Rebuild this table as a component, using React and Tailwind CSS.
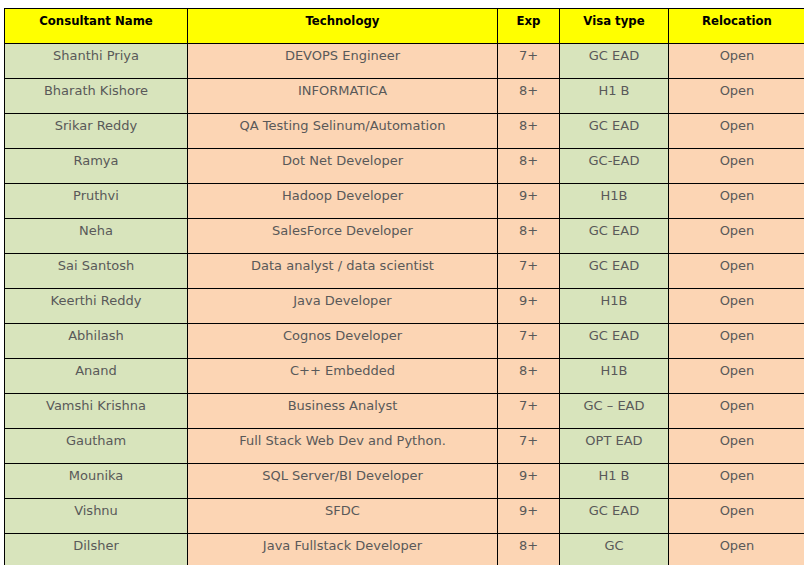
import React from "react";

const rows = [
  ["Shanthi Priya", "DEVOPS Engineer", "7+", "GC EAD", "Open"],
  ["Bharath Kishore", "INFORMATICA", "8+", "H1 B", "Open"],
  ["Srikar Reddy", "QA Testing Selinum/Automation", "8+", "GC EAD", "Open"],
  ["Ramya", "Dot Net Developer", "8+", "GC-EAD", "Open"],
  ["Pruthvi", "Hadoop Developer", "9+", "H1B", "Open"],
  ["Neha", "SalesForce Developer", "8+", "GC EAD", "Open"],
  ["Sai Santosh", "Data analyst / data scientist", "7+", "GC EAD", "Open"],
  ["Keerthi Reddy", "Java Developer", "9+", "H1B", "Open"],
  ["Abhilash", "Cognos Developer", "7+", "GC EAD", "Open"],
  ["Anand", "C++ Embedded", "8+", "H1B", "Open"],
  ["Vamshi Krishna", "Business Analyst", "7+", "GC \u2013 EAD", "Open"],
  ["Gautham", "Full Stack Web Dev and Python.", "7+", "OPT EAD", "Open"],
  ["Mounika", "SQL Server/BI Developer", "9+", "H1 B", "Open"],
  ["Vishnu", "SFDC", "9+", "GC EAD", "Open"],
  ["Dilsher", "Java Fullstack Developer", "8+", "GC", "Open"],
];

const headers = ["Consultant Name", "Technology", "Exp", "Visa type", "Relocation"];
const widths = ["w-[183px]", "w-[310px]", "w-[62px]", "w-[109px]", "w-[137px]"];
const bgs = ["bg-[#d8e4bc]", "bg-[#fcd5b4]", "bg-[#fcd5b4]", "bg-[#d8e4bc]", "bg-[#fcd5b4]"];

export default function App() {
  return (
    <div className="w-[804px] h-[565px] overflow-hidden bg-white pt-[8px] pl-[4px]" style={{ fontFamily: "Tahoma, 'DejaVu Sans', sans-serif" }}>
      <table className="border-collapse table-fixed w-[801px] text-[13px]">
        <thead>
          <tr className="h-[35px]">
            {headers.map((h, i) => (
              <th
                key={h}
                className={`${widths[i]} bg-[#ffff00] border border-black align-top pt-[2px] font-bold text-black text-center font-['DejaVu_Sans_Condensed',sans-serif]`}
              >
                {h}
              </th>
            ))}
          </tr>
        </thead>
        <tbody>
          {rows.map((r, ri) => (
            <tr key={ri} className="h-[35px]">
              {r.map((c, ci) => (
                <td key={ci} className={`${bgs[ci]} border border-black align-top pt-[2px] text-center text-[#595959]`}>
                  {c}
                </td>
              ))}
            </tr>
          ))}
        </tbody>
      </table>
    </div>
  );
}
